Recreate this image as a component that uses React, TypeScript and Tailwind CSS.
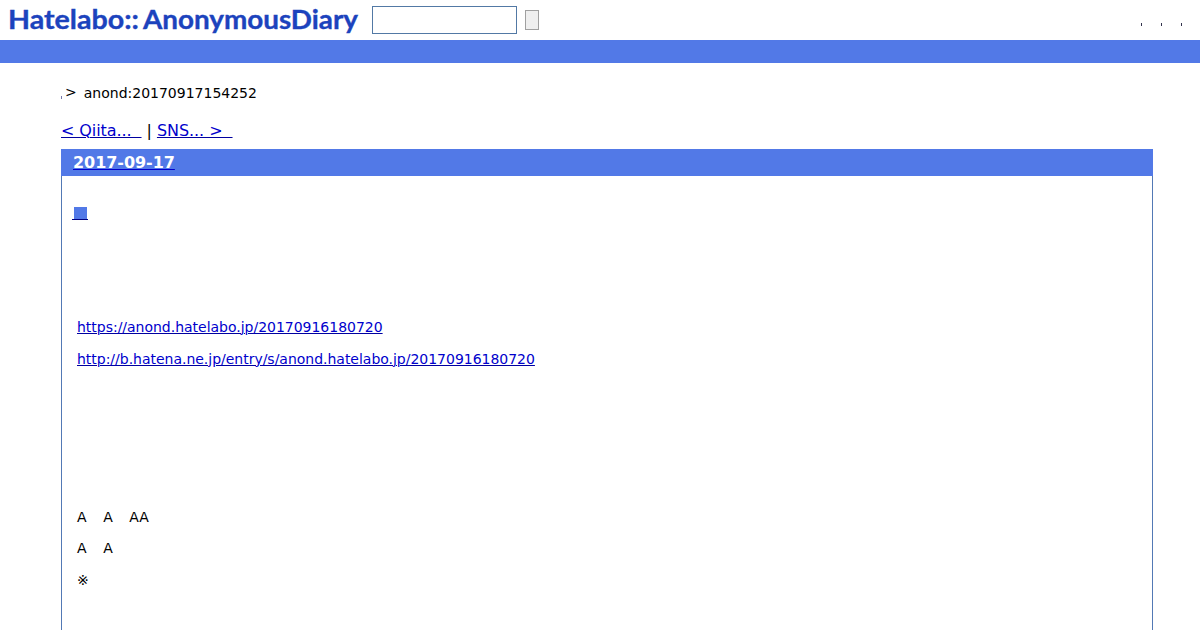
const menuItems = ['first', 'second', 'third'];

const links = [
  'https://anond.hatelabo.jp/20170916180720',
  'http://b.hatena.ne.jp/entry/s/anond.hatelabo.jp/20170916180720',
];

const linkClass = 'text-[#0000cc] underline decoration-[#0000a0] decoration-1';

function Logo() {
  return (
    <svg width="350" height="40" viewBox="0 0 350 40" className="block shrink-0" role="img">
      <g fill="#1c43bd" stroke="#1c43bd" strokeWidth="0.35" fontFamily="Lato, sans-serif" fontWeight="700" fontSize="26">
        <text x="-1" y="28.5" textLength="131" lengthAdjust="spacingAndGlyphs">Hatelabo::</text>
        <text x="134" y="28.5" textLength="215" lengthAdjust="spacingAndGlyphs">AnonymousDiary</text>
      </g>
    </svg>
  );
}

function Header() {
  return (
    <header>
      <div className="flex h-10 items-center pl-[9px] pr-[18px]">
        <Logo />
        <input
          type="text"
          className="ml-[13px] h-7 w-[145px] border border-[#5279a5] bg-white px-1 outline-none"
        />
        <button type="button" className="ml-2 h-5 w-[14px] border border-[#a0a0a0] bg-[#efefef]" />
        <ul className="ml-auto mt-[9px] flex gap-[19px]">
          {menuItems.map((item) => (
            <li key={item} className="h-[3px] w-px bg-[#33334d]" />
          ))}
        </ul>
      </div>
      <div className="h-[23px] bg-[#5279e7]" />
    </header>
  );
}

function Day() {
  return (
    <section className="mt-2 h-[481px] border-x border-[#5279b5]">
      <h2 className="-mx-px h-[27px] bg-[#5279e7] pl-3 text-base font-bold leading-[27px] tracking-[-0.05px] text-white">
        <a href="#" className="underline decoration-[#0000cc] decoration-1">2017-09-17</a>
      </h2>

      <h3 className="mt-[31px] flex h-[13px] pl-[10px]">
        <a href="#" className="flex w-4 justify-center border-b border-[#000080]">
          <span className="ml-px h-3 w-[13px] bg-[#5279e7]" />
        </a>
      </h3>

      <div className="pl-[15px] leading-[18px]">
        <div className="mt-[98px] flex flex-col gap-[14px] tracking-[-0.017px]">
          {links.map((href) => (
            <p key={href}>
              <a href="#" className={linkClass}>{href}</a>
            </p>
          ))}
        </div>
        <p className="mt-[140px] flex gap-[16.6px]">
          <span>A</span>
          <span>A</span>
          <span>AA</span>
        </p>
        <p className="mt-[13px] flex gap-[16.6px]">
          <span>A</span>
          <span>A</span>
        </p>
        <p className="mt-[14px]">※</p>
      </div>
    </section>
  );
}

export default function App() {
  return (
    <div className="h-[630px] w-[1200px] overflow-hidden bg-white font-['DejaVu_Sans','Noto_Sans_CJK_JP',sans-serif] text-sm text-black">
      <Header />
      <main className="ml-[61px] w-[1092px]">
        <div className="flex h-[58px] items-center pt-px">
          <span className="mt-[10px] h-[3px] w-px bg-[#7777aa]" />
          <span className="-mt-px ml-[3px]">&gt;</span>
          <span className="ml-[7px]">anond:20170917154252</span>
        </div>
        <div className="flex h-5 items-center text-base leading-5">
          <a href="#" className={`${linkClass} tracking-[-0.08px]`}>&lt; Qiita...&nbsp;&nbsp;</a>
          <span className="mx-[5px]">|</span>
          <a href="#" className={`${linkClass} tracking-[-0.06px]`}>SNS... &gt;&nbsp;&nbsp;</a>
        </div>
        <Day />
      </main>
    </div>
  );
}
